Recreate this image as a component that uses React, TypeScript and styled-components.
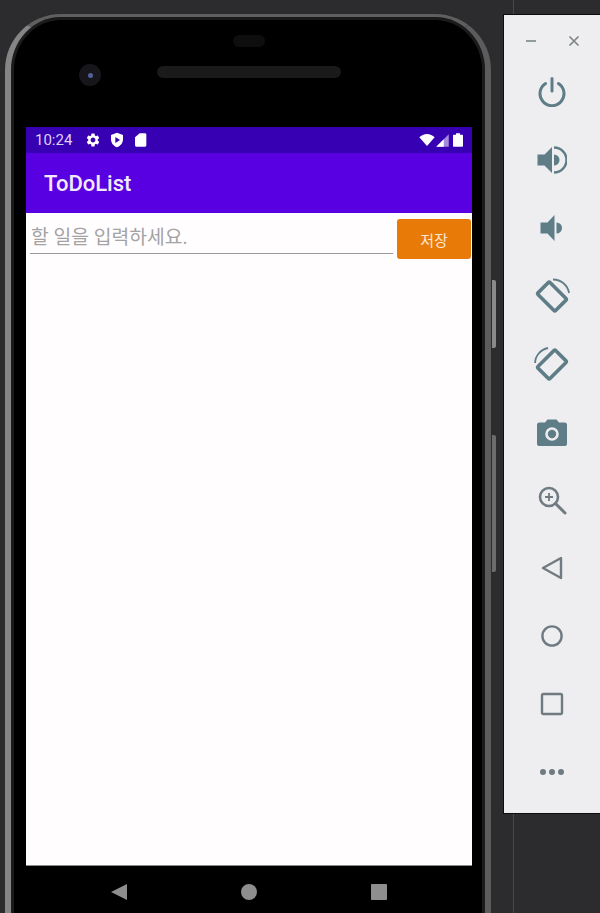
import React from 'react';
import styled, { createGlobalStyle } from 'styled-components';

const iconColor = '#5f7d87';
const navColor = '#6f7b80';

const PowerIcon = () => (
  <PanelSvg viewBox="0 0 30 30">
    <path d="M8.6 6.5A12 12 0 1 0 21.4 6.5" fill="none" stroke={iconColor} strokeWidth="3" strokeLinecap="round" />
    <path d="M15 1.5V14" fill="none" stroke={iconColor} strokeWidth="3" strokeLinecap="round" />
  </PanelSvg>
);

const VolumeUpIcon = () => (
  <PanelSvg viewBox="0 0 30 30">
    <path d="M0.5 9.5H7.5L15 2V28L7.5 20.5H0.5Z" fill={iconColor} />
    <path d="M17 9.5A5.5 5.5 0 0 1 17 20.5Z" fill={iconColor} />
    <path d="M17 2.5A12.5 12.5 0 0 1 17 27.5" fill="none" stroke={iconColor} strokeWidth="2.4" />
  </PanelSvg>
);

const VolumeDownIcon = () => (
  <PanelSvg viewBox="0 0 30 30">
    <path d="M3.5 9.5H10.5L17.5 2V28L10.5 20.5H3.5Z" fill={iconColor} />
    <path d="M19.5 9.5A5.5 5.5 0 0 1 19.5 20.5Z" fill={iconColor} />
  </PanelSvg>
);

const RotateLeftIcon = () => (
  <PanelSvg $size={36} viewBox="0 0 36 36">
    <rect x="5.5" y="10" width="25" height="17" rx="1.5" transform="rotate(45 18 18.5)" fill="none" stroke={iconColor} strokeWidth="3.6" />
    <path d="M19 1.5A16 16 0 0 1 35 15" fill="none" stroke={iconColor} strokeWidth="1.8" />
  </PanelSvg>
);

const RotateRightIcon = () => (
  <PanelSvg $size={36} viewBox="0 0 36 36">
    <rect x="5.5" y="10" width="25" height="17" rx="1.5" transform="rotate(-45 18 18.5)" fill="none" stroke={iconColor} strokeWidth="3.6" />
    <path d="M1 17A16 16 0 0 1 14 2" fill="none" stroke={iconColor} strokeWidth="1.8" />
  </PanelSvg>
);

const CameraIcon = () => (
  <PanelSvg viewBox="0 0 30 30">
    <path
      d="M10.5 2.5H19.5L22 5.5H28C29 5.5 30 6.5 30 7.5V27C30 28 29 29 28 29H2C1 29 0 28 0 27V7.5C0 6.5 1 5.5 2 5.5H8Z"
      fill={iconColor}
    />
    <circle cx="15" cy="17" r="5.5" fill="none" stroke="#eeeef0" strokeWidth="2.6" />
  </PanelSvg>
);

const ZoomIcon = () => (
  <PanelSvg viewBox="0 0 30 30">
    <circle cx="12" cy="12" r="9" fill="none" stroke={navColor} strokeWidth="2.6" />
    <path d="M12 8V16M8 12H16" stroke={navColor} strokeWidth="1.8" />
    <path d="M18.5 18.5L28 28" stroke={navColor} strokeWidth="3" strokeLinecap="round" />
  </PanelSvg>
);

const BackIcon = () => (
  <PanelSvg viewBox="0 0 30 30">
    <path d="M6 15L24 5V25Z" fill="none" stroke={navColor} strokeWidth="2.4" strokeLinejoin="round" />
  </PanelSvg>
);

const HomeIcon = () => (
  <PanelSvg viewBox="0 0 30 30">
    <circle cx="15" cy="15" r="9.6" fill="none" stroke={navColor} strokeWidth="2.4" />
  </PanelSvg>
);

const OverviewIcon = () => (
  <PanelSvg viewBox="0 0 30 30">
    <rect x="5" y="5" width="20" height="20" rx="1.5" fill="none" stroke={navColor} strokeWidth="2.4" />
  </PanelSvg>
);

const MoreIcon = () => (
  <PanelSvg viewBox="0 0 30 30">
    <circle cx="6" cy="15" r="3" fill={navColor} />
    <circle cx="15" cy="15" r="3" fill={navColor} />
    <circle cx="24" cy="15" r="3" fill={navColor} />
  </PanelSvg>
);

const panelIcons = [
  PowerIcon,
  VolumeUpIcon,
  VolumeDownIcon,
  RotateLeftIcon,
  RotateRightIcon,
  CameraIcon,
  ZoomIcon,
  BackIcon,
  HomeIcon,
  OverviewIcon,
  MoreIcon,
];

const App = () => {
  return (
    <Page>
      <GlobalStyle />
      <Phone>
        <VolumeRocker />
        <PowerKey />
        <Earpiece />
        <SensorRow>
          <Camera>
            <Lens />
          </Camera>
          <Speaker />
        </SensorRow>
        <Screen>
          <StatusBar>
            <Clock>10:24</Clock>
            <StatusSvg viewBox="0 0 24 24">
              <path d="M19.14 12.94c.04-.3.06-.61.06-.94 0-.32-.02-.64-.07-.94l2.03-1.58c.18-.14.23-.41.12-.61l-1.92-3.32c-.12-.22-.37-.29-.59-.22l-2.39.96c-.5-.38-1.03-.7-1.62-.94l-.36-2.54c-.04-.24-.24-.41-.48-.41h-3.84c-.24 0-.43.17-.47.41l-.36 2.54c-.59.24-1.13.57-1.62.94l-2.39-.96c-.22-.08-.47 0-.59.22L2.74 8.87c-.12.21-.08.47.12.61l2.03 1.58c-.05.3-.09.63-.09.94s.02.64.07.94l-2.03 1.58c-.18.14-.23.41-.12.61l1.92 3.32c.12.22.37.29.59.22l2.39-.96c.5.38 1.03.7 1.62.94l.36 2.54c.05.24.24.41.48.41h3.84c.24 0 .44-.17.47-.41l.36-2.54c.59-.24 1.13-.56 1.62-.94l2.39.96c.22.08.47 0 .59-.22l1.92-3.32c.12-.22.07-.47-.12-.61l-2.01-1.58zM12 15.6c-1.98 0-3.6-1.62-3.6-3.6s1.62-3.6 3.6-3.6 3.6 1.62 3.6 3.6-1.62 3.6-3.6 3.6z" />
            </StatusSvg>
            <StatusSvg viewBox="0 0 24 24">
              <path
                fillRule="evenodd"
                d="M12 1L21 4.5V11C21 16.5 17.5 21 12 23C6.5 21 3 16.5 3 11V4.5ZM9.5 7.5V16.5L16.5 12Z"
              />
            </StatusSvg>
            <StatusSvg viewBox="0 0 24 24">
              <path d="M18 2H10L3 8V20C3 21.1 3.9 22 5 22H18C19.1 22 20 21.1 20 20V4C20 2.9 19.1 2 18 2Z" />
            </StatusSvg>
            <StatusRight>
              <StatusSvg viewBox="0 0 24 24">
                <path d="M12 21L0.5 8C3.5 5 7.5 3 12 3S20.5 5 23.5 8Z" />
              </StatusSvg>
              <StatusSvg $size={15} viewBox="0 0 24 24">
                <path d="M22 2V22H2Z" opacity="0.55" />
                <path d="M14 10V22H2Z" />
              </StatusSvg>
              <StatusSvg viewBox="0 0 24 24">
                <path d="M18 4H15V2H9V4H6C5.2 4 4.5 4.7 4.5 5.5V20.5C4.5 21.3 5.2 22 6 22H18C18.8 22 19.5 21.3 19.5 20.5V5.5C19.5 4.7 18.8 4 18 4Z" />
              </StatusSvg>
            </StatusRight>
          </StatusBar>
          <AppBar>ToDoList</AppBar>
          <Content>
            <InputRow>
              <TodoInput placeholder="할 일을 입력하세요." readOnly />
              <SaveButton>저장</SaveButton>
            </InputRow>
          </Content>
        </Screen>
        <NavBar>
          <NavSvg viewBox="0 0 18 18">
            <path d="M1 9L17 1V17Z" />
          </NavSvg>
          <NavSvg viewBox="0 0 18 18">
            <circle cx="9" cy="9" r="8" />
          </NavSvg>
          <NavSvg viewBox="0 0 18 18">
            <rect x="1" y="1" width="16" height="16" rx="1" />
          </NavSvg>
        </NavBar>
      </Phone>
      <SideColumn>
        <TopDivider />
        <Panel>
          <WindowControls>
            <WindowSvg viewBox="0 0 12 12">
              <path d="M1 6H11" />
            </WindowSvg>
            <WindowSvg viewBox="0 0 12 12">
              <path d="M1.5 1.5L10.5 10.5M10.5 1.5L1.5 10.5" />
            </WindowSvg>
          </WindowControls>
          <PanelIcons>
            {panelIcons.map((Icon, i) => (
              <IconSlot key={i}>
                <Icon />
              </IconSlot>
            ))}
          </PanelIcons>
        </Panel>
        <Divider />
      </SideColumn>
    </Page>
  );
};

export default App;

const GlobalStyle = createGlobalStyle`
  html, body {
    margin: 0;
    padding: 0;
    background: #2c2c2e;
  }
`;

const Page = styled.div`
  width: 600px;
  height: 913px;
  overflow: hidden;
  background: #2c2c2e;
  display: flex;
  align-items: flex-start;
  padding-left: 5px;
  box-sizing: border-box;
  font-family: Roboto, "Noto Sans CJK KR", sans-serif;
`;

const Phone = styled.div`
  position: relative;
  flex: none;
  width: 486px;
  height: 960px;
  margin-top: 14px;
  box-sizing: border-box;
  padding: 18px 13px 0 15px;
  background: #000;
  border-radius: 56px 56px 0 0;
  border-style: solid;
  border-width: 3px 6px 0 6px;
  border-color: #5f5f5f #5c5c5c #000 #858585;
  box-shadow: inset 0 0 0 3px #1b1b1b;
`;

const VolumeRocker = styled.div`
  position: absolute;
  top: 418px;
  right: -11px;
  width: 4px;
  height: 137px;
  background: #6c6c6c;
  border-radius: 0 2px 2px 0;
`;

const PowerKey = styled.div`
  position: absolute;
  top: 263px;
  right: -11px;
  width: 4px;
  height: 68px;
  background: #8a8a8a;
  border-radius: 0 2px 2px 0;
`;

const Earpiece = styled.div`
  width: 32px;
  height: 12px;
  margin: 0 auto;
  border-radius: 6px;
  background: #0e0e0e;
`;

const SensorRow = styled.div`
  display: flex;
  align-items: center;
  height: 38px;
  margin: 7px 0 35px;
  padding-left: 53px;
`;

const Camera = styled.div`
  width: 22px;
  height: 22px;
  border-radius: 50%;
  background: #17171b;
  display: flex;
  align-items: center;
  justify-content: center;
  margin-top: 4px;
`;

const Lens = styled.div`
  width: 5px;
  height: 5px;
  border-radius: 50%;
  background: #55609a;
`;

const Speaker = styled.div`
  width: 184px;
  height: 12px;
  margin-left: 56px;
  margin-top: -3px;
  border-radius: 6px;
  background: #1a1a1a;
`;

const Screen = styled.div`
  width: 446px;
  height: 739px;
  background: #fffdfe;
  border-bottom: 1px solid #8a8a8a;
  box-sizing: border-box;
  display: flex;
  flex-direction: column;
`;

const StatusBar = styled.div`
  height: 26px;
  background: #3700b3;
  display: flex;
  align-items: center;
  padding: 0 6px 0 9px;
  gap: 8px;
  color: #fff;
`;

const Clock = styled.span`
  font-size: 15px;
  color: #dcd3f2;
  margin-right: 5px;
`;

const StatusSvg = styled.svg<{ $size?: number }>`
  width: ${(p) => p.$size ?? 16}px;
  height: ${(p) => p.$size ?? 16}px;
  fill: #fff;
`;

const StatusRight = styled.div`
  margin-left: auto;
  display: flex;
  align-items: center;
`;

const AppBar = styled.div`
  height: 60px;
  background: #5900e2;
  display: flex;
  align-items: center;
  padding: 1px 0 0 18px;
  box-sizing: border-box;
  color: #f2eafc;
  font-size: 22px;
  font-weight: 500;
`;

const Content = styled.div`
  flex: 1;
`;

const InputRow = styled.div`
  display: flex;
  align-items: flex-start;
  padding: 6px 1px 0 4px;
  gap: 4px;
`;

const TodoInput = styled.input`
  width: 363px;
  height: 35px;
  border: none;
  border-bottom: 1px solid #9a9a9a;
  outline: none;
  padding: 3px 0 0 1px;
  box-sizing: border-box;
  background: transparent;
  font-family: Roboto, "Noto Sans CJK KR", sans-serif;
  font-size: 19.3px;

  &::placeholder {
    color: #a3a3a3;
    opacity: 1;
  }
`;

const SaveButton = styled.button`
  width: 74px;
  height: 40px;
  border: none;
  border-radius: 3px;
  background: #e87b08;
  color: #fbe6d2;
  font-family: Roboto, "Noto Sans CJK KR", sans-serif;
  font-size: 15px;
`;

const NavBar = styled.div`
  width: 446px;
  height: 52px;
  display: grid;
  grid-template-columns: repeat(3, 130px);
  justify-content: center;
  justify-items: center;
  align-items: center;
  gap: 0;
`;

const NavSvg = styled.svg`
  width: 18px;
  height: 18px;
  fill: #8e8e8e;
`;

const SideColumn = styled.div`
  flex: none;
  width: 97px;
  margin-left: 12px;
  height: 100%;
  display: flex;
  flex-direction: column;
`;

const TopDivider = styled.div`
  width: 1px;
  height: 14px;
  margin-left: 10px;
  background: #48484a;
`;

const Panel = styled.div`
  height: 800px;
  background: #eeeef0;
  box-sizing: border-box;
  border-left: 1px solid #0c0c0c;
  border-bottom: 1px solid #0c0c0c;
  border-top: 1px solid #0c0c0c;
  display: flex;
  flex-direction: column;
`;

const WindowControls = styled.div`
  height: 51px;
  display: flex;
  justify-content: center;
  align-items: center;
  gap: 31px;
`;

const WindowSvg = styled.svg`
  width: 12px;
  height: 12px;
  fill: none;
  stroke: #7c8488;
  stroke-width: 1.6;
`;

const PanelIcons = styled.div`
  display: grid;
  grid-auto-rows: 68px;
  justify-items: center;
  align-items: center;
  margin-top: -8px;
`;

const IconSlot = styled.div`
  display: flex;
`;

const PanelSvg = styled.svg<{ $size?: number }>`
  width: ${(p) => p.$size ?? 30}px;
  height: ${(p) => p.$size ?? 30}px;
`;

const Divider = styled.div`
  width: 1px;
  flex: 1;
  margin-left: 10px;
  background: #48484a;
`;
